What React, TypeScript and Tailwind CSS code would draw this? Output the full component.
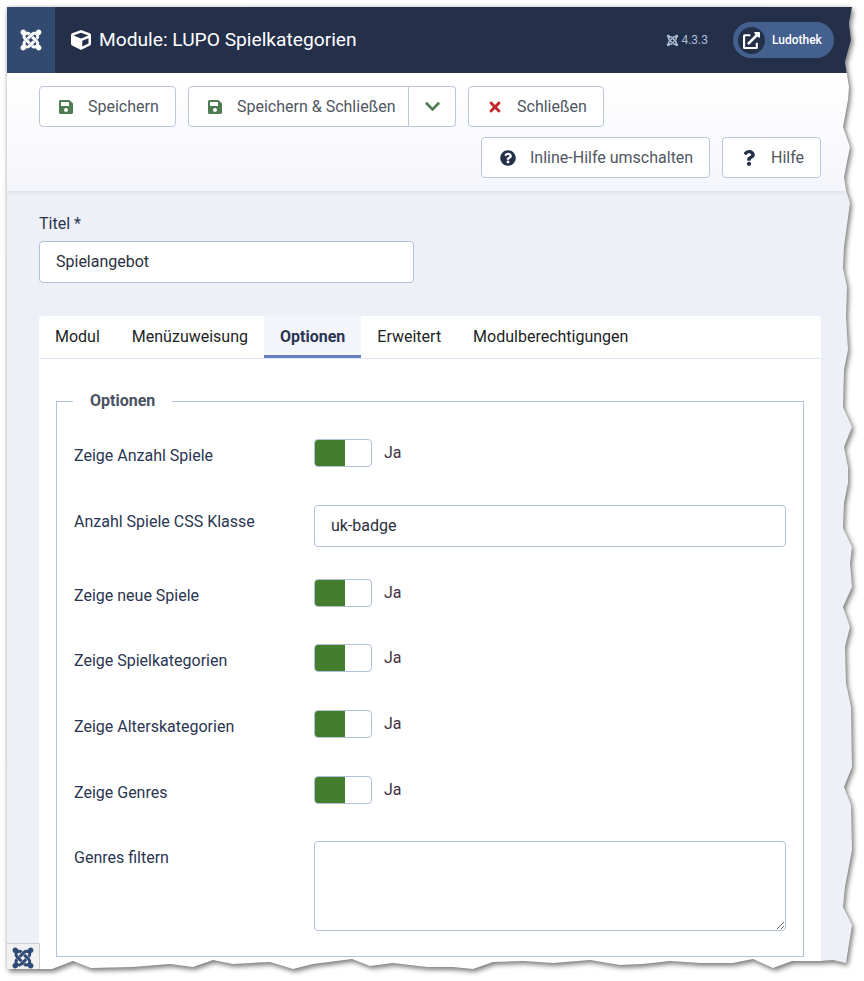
import type { ReactNode } from "react";
import {
  FaChevronDown,
  FaCube,
  FaExternalLinkAlt,
  FaJoomla,
  FaQuestion,
  FaQuestionCircle,
  FaSave,
  FaTimes,
} from "react-icons/fa";

const TORN =
  "M7 7L852 7L849 23L851 40L845 62L849 87L848 100L843 127L850 147L844 177L846 190L850 203L844 247L843 268L847 287L846 317L848 350L844 370L843 407L852 427L844 447L848 467L848 483L844 503L843 528L852 547L850 563L852 587L843 607L850 627L845 647L846 683L851 707L852 767L844 787L851 805L852 850L845 887L843 907L852 925L846 963L833 960L820 961L792 961L773 968L753 959L733 963L700 963L670 961L643 964L620 965L590 960L553 963L523 961L493 962L473 969L453 967L427 967L393 963L370 966L352 959L313 964L293 969L270 962L233 964L213 960L193 967L170 964L133 967L91 968L73 961L52 969L7 969Z";
const OUTER = "M0 0H864V981H0Z";

function TornEdge() {
  return (
    <svg className="absolute inset-0 pointer-events-none" width="864" height="981">
      <defs>
        <clipPath id="outside">
          <path d={`${OUTER}${TORN}`} clipRule="evenodd" />
        </clipPath>
        <filter id="blur" x="-5%" y="-5%" width="110%" height="110%">
          <feGaussianBlur stdDeviation="2.5" />
        </filter>
      </defs>
      <path d={`${OUTER}${TORN}`} fill="#fff" fillRule="evenodd" />
      <g clipPath="url(#outside)">
        <path d={TORN} fill="#000" opacity="0.2" filter="url(#blur)" />
        <path d={TORN} fill="#000" opacity="0.45" filter="url(#blur)" transform="translate(2 3)" />
      </g>
    </svg>
  );
}

function Btn({ className, children }: { className: string; children: ReactNode }) {
  return (
    <div
      className={`h-[41px] flex items-center bg-white border border-[#bdc6d9] rounded-[4px] text-[16px] text-[#4f5763] ${className}`}
    >
      {children}
    </div>
  );
}

function Toggle() {
  return (
    <div className="flex items-start">
      <div className="w-[58px] h-[28px] flex bg-white border border-[#b2c0d9] rounded-[4px] overflow-hidden">
        <div className="w-[30px] bg-[#457d2f]" />
      </div>
      <span className="ml-3 pt-[2px] text-[16px] leading-6 text-[#3f3345]">Ja</span>
    </div>
  );
}

function Row({ label, className, children }: { label: string; className: string; children: ReactNode }) {
  return (
    <div className={`flex ${className}`}>
      <div className="w-[240px] h-[28px] shrink-0 pt-[5px] text-[16px] leading-6 text-[#2a3552]">{label}</div>
      <div className="flex-1">{children}</div>
    </div>
  );
}

export default function App() {
  return (
    <div className="relative w-[864px] h-[981px] overflow-hidden bg-white font-['Roboto',sans-serif]">
      <div className="ml-[7px] mt-[7px] w-[857px] h-[974px] bg-[#edf0f6]">
        {/* Header */}
        <header className="h-[66px] flex items-center bg-[#242f4a] pr-[30px] text-white">
          <div className="w-[48px] h-full flex items-center justify-center bg-[#334a70]">
            <FaJoomla className="text-[24px]" />
          </div>
          <FaCube className="ml-4 text-[20px]" />
          <h1 className="ml-[8px] text-[19.2px] font-normal">Module: LUPO Spielkategorien</h1>
          <div className="ml-auto flex items-center gap-[2px] text-[12px] text-[#a9bcd8]">
            <FaJoomla className="text-[13px]" />
            <span>4.3.3</span>
          </div>
          <div className="ml-[25px] w-[101px] h-[36px] flex items-center bg-[#43608f] rounded-full pl-[5px]">
            <div className="w-[27px] h-[27px] flex items-center justify-center rounded-full bg-[#242f4a]">
              <FaExternalLinkAlt className="text-[17px]" />
            </div>
            <span className="ml-[7px] text-[12px] font-medium">Ludothek</span>
          </div>
        </header>

        {/* Toolbar */}
        <div className="flex flex-wrap gap-x-3 gap-y-[10px] pt-[13px] pb-[13px] pl-[32px] pr-[43px] bg-gradient-to-b from-white to-[#f5f6fb] shadow-[0_1px_4px_rgba(120,135,170,0.18)]">
          <Btn className="w-[137px] pl-[18px]">
            <FaSave className="text-[16px] text-[#4f7d52]" />
            <span className="ml-[14px]">Speichern</span>
          </Btn>
          <div className="flex">
            <Btn className="w-[221px] pl-[18px] rounded-r-none">
              <FaSave className="text-[16px] text-[#4f7d52]" />
              <span className="ml-[14px]">Speichern &amp; Schließen</span>
            </Btn>
            <Btn className="w-[47px] justify-center border-l-0 rounded-l-none">
              <FaChevronDown className="text-[17px] text-[#4f7d52]" />
            </Btn>
          </div>
          <Btn className="w-[136px] pl-[18px]">
            <FaTimes className="text-[16px] text-[#c12a2a]" />
            <span className="ml-[14px]">Schließen</span>
          </Btn>
          <Btn className="ml-auto w-[229px] pl-[18px]">
            <FaQuestionCircle className="text-[16px] text-[#242f4a]" />
            <span className="ml-[14px]">Inline-Hilfe umschalten</span>
          </Btn>
          <Btn className="w-[99px] pl-[18px]">
            <FaQuestion className="text-[16px] text-[#242f4a]" />
            <span className="ml-[14px]">Hilfe</span>
          </Btn>
        </div>

        {/* Form */}
        <div className="pt-[21px] pl-[32px] pr-[43px]">
          <label className="block text-[16px] leading-6 text-[#2a3552]">Titel *</label>
          <div className="mt-[5px] w-[375px] h-[42px] flex items-center pl-[16px] bg-white border border-[#b2c0d9] rounded-[4px] text-[16px] text-[#2a3040]">
            Spielangebot
          </div>

          <div className="mt-[33px] bg-white rounded-t-[4px]">
            <nav className="h-[43px] flex border-b border-[#e2e7f3] text-[16px] text-[#1c1f26]">
              <div className="h-[42px] flex items-center px-4">Modul</div>
              <div className="h-[42px] flex items-center px-4">Menüzuweisung</div>
              <div className="h-[42px] flex items-center px-4 pt-[3px] font-bold text-[#2a3552] bg-[#f4f5fa] border-b-[3px] border-[#6b80c0]">
                Optionen
              </div>
              <div className="h-[42px] flex items-center px-4">Erweitert</div>
              <div className="h-[42px] flex items-center px-4">Modulberechtigungen</div>
            </nav>

            <div className="pt-[30px] px-[17px] pb-[30px]">
              <fieldset className="border border-[#b2c0d9] px-[17px] pb-[25px]">
                <legend className="ml-[-1px] px-[17px] text-[16px] leading-6 font-bold text-[#4a5263]">Optionen</legend>
                <Row label="Zeige Anzahl Spiele" className="mt-[26px]">
                  <Toggle />
                </Row>
                <Row label="Anzahl Spiele CSS Klasse" className="mt-[38px]">
                  <div className="h-[42px] flex items-center pl-[16px] bg-white border border-[#b2c0d9] rounded-[4px] text-[16px] text-[#2a3040]">
                    uk-badge
                  </div>
                </Row>
                <Row label="Zeige neue Spiele" className="mt-[32px]">
                  <Toggle />
                </Row>
                <Row label="Zeige Spielkategorien" className="mt-[37px]">
                  <Toggle />
                </Row>
                <Row label="Zeige Alterskategorien" className="mt-[38px]">
                  <Toggle />
                </Row>
                <Row label="Zeige Genres" className="mt-[38px]">
                  <Toggle />
                </Row>
                <Row label="Genres filtern" className="mt-[37px]">
                  <textarea
                    readOnly
                    className="block w-full h-[90px] bg-white border border-[#b2c0d9] rounded-[4px]"
                  />
                </Row>
              </fieldset>
            </div>
          </div>
        </div>
      </div>

      {/* Corner badge */}
      <div className="absolute left-[7px] top-[943px] w-[33px] h-[28px] flex items-center justify-center bg-[#f1f1f1] border-t border-r border-[#cfcfcf]">
        <FaJoomla className="text-[24px] text-[#2f4a76]" />
      </div>

      <TornEdge />
    </div>
  );
}
